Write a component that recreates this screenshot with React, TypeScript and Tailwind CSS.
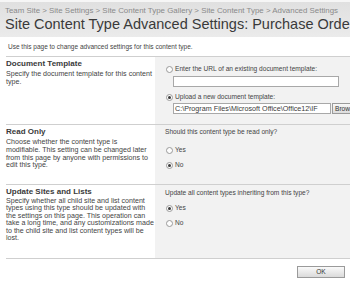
import React from "react";

function Radio({ checked }: { checked?: boolean }) {
  return (
    <span className="inline-flex h-[7px] w-[7px] shrink-0 items-center justify-center rounded-full border border-[#9a9a9a] bg-[#fdfdfd]">
      {checked ? <span className="h-[3px] w-[3px] rounded-full bg-[#3a3a3a]" /> : null}
    </span>
  );
}

function Line({ children }: { children: React.ReactNode }) {
  return <span className="block whitespace-nowrap">{children}</span>;
}

export default function App() {
  return (
    <div
      className="relative h-[286px] w-[350px] overflow-hidden bg-white text-[#444]"
      style={{ fontFamily: '"Liberation Sans", Arial, sans-serif' }}
    >
      {/* header */}
      <div className="h-[37px] border-t-2 border-[#f6f6f6] bg-gradient-to-b from-[#e0e0e0] to-[#ebebeb] px-[5px]">
        <div className="whitespace-nowrap pt-[4px] text-[7.9px] leading-[10px] text-[#8a8a8a]">
          Team Site &gt; Site Settings &gt; Site Content Type Gallery &gt; Site Content Type &gt; Advanced Settings
        </div>
        <div className="whitespace-nowrap text-[14.5px] leading-[17px] text-[#3a3a3a]">
          Site Content Type Advanced Settings: Purchase Order
        </div>
      </div>

      {/* intro */}
      <div className="h-[19px] pl-[8px] pt-[6px] text-[6.5px] leading-[8px] text-[#444]">
        Use this page to change advanced settings for this content type.
      </div>

      <div className="flex">
        <div className="ml-[3px] h-[240px] w-[2px] bg-[#b8b8b8]" />
        <div className="ml-[3px] flex-1">
          {/* Section 1 */}
          <div className="flex h-[68px] border-t border-[#cfcfcf]">
            <div className="w-[149px] pt-[2px]">
              <div className="text-[8px] font-bold leading-[9px] text-[#3a3a3a]">Document Template</div>
              <div className="mt-[3px] text-[7.1px] leading-[7.8px]">
                <Line>Specify the document template for this content</Line>
                <Line>type.</Line>
              </div>
            </div>
            <div className="flex-1 bg-[#f2f2f2] pl-[11px] pt-[8px] text-[6.6px] leading-[8px]">
              <div className="flex items-center gap-[2px]">
                <Radio />
                <span>Enter the URL of an existing document template:</span>
              </div>
              <div className="ml-[7px] mt-[3px] h-[11px] w-[166px] border border-[#a8a8a8] bg-white" />
              <div className="mt-[6px] flex items-center gap-[2px]">
                <Radio checked />
                <span>Upload a new document template:</span>
              </div>
              <div className="ml-[7px] mt-[2px] flex h-[11px] items-stretch">
                <div className="w-[158px] overflow-hidden whitespace-nowrap border border-[#a8a8a8] bg-white pl-[1px] text-[7.2px] leading-[9px] text-[#3a3a3a]">
                  C:\Program Files\Microsoft Office\Office12\IF
                </div>
                <div className="ml-[1px] w-[30px] shrink-0 whitespace-nowrap border border-[#9a9a9a] bg-gradient-to-b from-[#f8f8f8] to-[#dcdcdc] pl-[2px] text-[6.6px] leading-[9px] text-[#333]">
                  Browse...
                </div>
              </div>
            </div>
          </div>

          {/* Section 2 */}
          <div className="flex h-[60px] border-t border-[#cfcfcf]">
            <div className="w-[149px] pt-[2px]">
              <div className="text-[8px] font-bold leading-[9px] text-[#3a3a3a]">Read Only</div>
              <div className="mt-[3px] text-[7.1px] leading-[7.8px]">
                <Line>Choose whether the content type is</Line>
                <Line>modifiable. This setting can be changed later</Line>
                <Line>from this page by anyone with permissions to</Line>
                <Line>edit this type.</Line>
              </div>
            </div>
            <div className="flex-1 bg-[#f2f2f2] pl-[11px] pt-[3px] text-[6.6px] leading-[8px]">
              <div className="-ml-[1px]">Should this content type be read only?</div>
              <div className="mt-[10px] flex items-center gap-[2px]">
                <Radio />
                <span>Yes</span>
              </div>
              <div className="mt-[7px] flex items-center gap-[2px]">
                <Radio checked />
                <span>No</span>
              </div>
            </div>
          </div>

          {/* Section 3 */}
          <div className="flex h-[74px] border-t border-[#cfcfcf]">
            <div className="w-[149px] pt-[2px]">
              <div className="text-[8px] font-bold leading-[9px] text-[#3a3a3a]">Update Sites and Lists</div>
              <div className="mt-[2px] text-[7.1px] leading-[7.4px]">
                <Line>Specify whether all child site and list content</Line>
                <Line>types using this type should be updated with</Line>
                <Line>the settings on this page. This operation can</Line>
                <Line>take a long time, and any customizations made</Line>
                <Line>to the child site and list content types will be</Line>
                <Line>lost.</Line>
              </div>
            </div>
            <div className="flex-1 bg-[#f2f2f2] pl-[11px] pt-[4px] text-[6.6px] leading-[8px]">
              <div className="-ml-[1px]">Update all content types inheriting from this type?</div>
              <div className="mt-[7px] flex items-center gap-[2px]">
                <Radio checked />
                <span>Yes</span>
              </div>
              <div className="mt-[7px] flex items-center gap-[2px]">
                <Radio />
                <span>No</span>
              </div>
            </div>
          </div>

          {/* buttons */}
          <div className="flex h-[30px] justify-end gap-[5px] border-t border-[#cfcfcf] pt-[7px]">
            <div className="flex h-[12px] w-[48px] shrink-0 items-center justify-center border border-[#9a9a9a] bg-gradient-to-b from-[#fafafa] to-[#dadada] text-[6.6px] text-[#333]">
              OK
            </div>
            <div className="-mr-[40px] flex h-[12px] w-[52px] shrink-0 items-center justify-center border border-[#9a9a9a] bg-gradient-to-b from-[#fafafa] to-[#dadada] text-[6.6px] text-[#333]">
              Cancel
            </div>
          </div>
        </div>
      </div>
    </div>
  );
}
